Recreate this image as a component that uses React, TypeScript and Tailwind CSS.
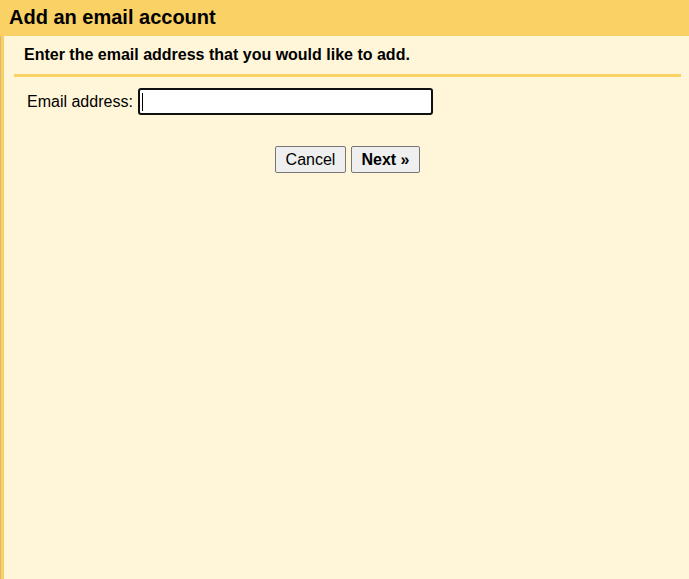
export default function App() {
  return (
    <div className="flex h-screen flex-col bg-[#fff5d8] font-['Liberation_Sans',Arial,sans-serif] text-black">
      {/* Header */}
      <div className="h-9 shrink-0 bg-[#fad165] pl-[9px] pt-[5px]">
        <h1 className="text-[20px] font-bold leading-6">Add an email account</h1>
      </div>

      {/* Body, with a two-tone left edge */}
      <div className="flex flex-1 border-l border-[#dcba68]">
        <div className="flex-1 border-l-[3px] border-[#f6cf6a]">
          <div className="pl-[10px] pr-[8px] pt-[9px]">
            <p className="pl-[10px] text-[16px] font-bold leading-5">
              Enter the email address that you would like to add.
            </p>
            <div className="mt-[9px] h-[3px] bg-[#fad165]" />
          </div>

          <div className="mt-[11px] flex items-center pl-[23px]">
            <label className="text-[16px] leading-5">Email address:</label>
            <div className="ml-[5px] flex h-[27px] w-[295px] items-center rounded-[3px] border-2 border-[#101010] bg-white pl-[2px]">
              <div className="h-[18px] w-px bg-black" />
            </div>
          </div>

          <div className="mt-[31px] flex justify-center gap-[5px] pl-[2px]">
            <button className="h-[27px] w-[71px] rounded-[2px] border border-[#767676] bg-[#efefef] text-[16px]">
              Cancel
            </button>
            <button className="h-[27px] w-[69px] rounded-[2px] border border-[#767676] bg-[#efefef] text-[16px] font-bold">
              Next »
            </button>
          </div>
        </div>
      </div>
    </div>
  );
}
